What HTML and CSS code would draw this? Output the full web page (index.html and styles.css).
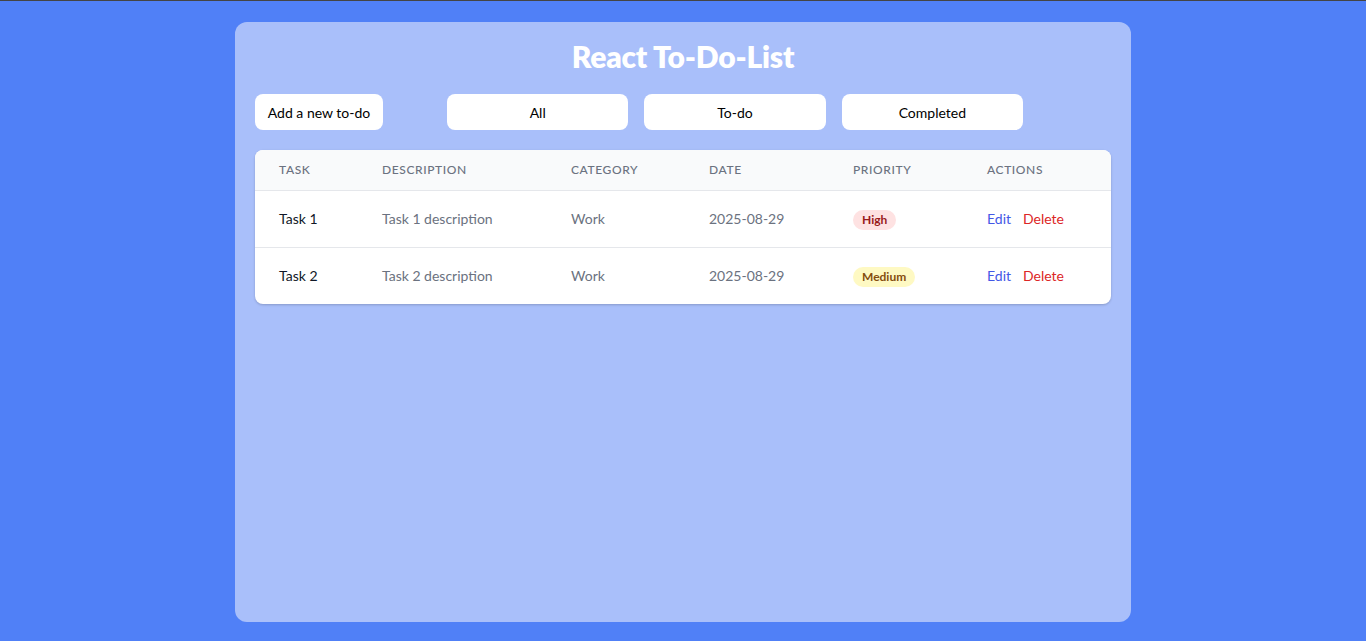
FILE: index.html
```html
<!DOCTYPE html>
<html lang="en">
<head>
<meta charset="utf-8">
<title>React To-Do-List</title>
<link rel="stylesheet" href="styles.css">
</head>
<body>
<div class="topline"></div>
<main class="page">
  <section class="panel">
    <h1 class="title">React To-Do-List</h1>
    <div class="toolbar">
      <button class="btn btn-add">Add a new to-do</button>
      <div class="filters">
        <button class="btn btn-filter">All</button>
        <button class="btn btn-filter">To-do</button>
        <button class="btn btn-filter">Completed</button>
      </div>
    </div>
    <div class="table-wrap">
      <table class="todo-table">
        <colgroup>
          <col class="c1"><col class="c2"><col class="c3"><col class="c4"><col class="c5"><col class="c6">
        </colgroup>
        <thead>
          <tr>
            <th>Task</th><th>Description</th><th>Category</th><th>Date</th><th>Priority</th><th>Actions</th>
          </tr>
        </thead>
        <tbody>
          <tr>
            <td class="task">Task 1</td>
            <td class="muted">Task 1 description</td>
            <td class="muted">Work</td>
            <td class="muted">2025-08-29</td>
            <td><span class="badge badge-high">High</span></td>
            <td class="actions"><a class="edit">Edit</a><a class="delete">Delete</a></td>
          </tr>
          <tr>
            <td class="task">Task 2</td>
            <td class="muted">Task 2 description</td>
            <td class="muted">Work</td>
            <td class="muted">2025-08-29</td>
            <td><span class="badge badge-medium">Medium</span></td>
            <td class="actions"><a class="edit">Edit</a><a class="delete">Delete</a></td>
          </tr>
        </tbody>
      </table>
    </div>
  </section>
</main>
</body>
</html>
```
FILE: styles.css
```css
* { box-sizing: border-box; }
html, body { height: 100%; }
body {
  margin: 0;
  background: #5080f7;
  font-family: Lato, "Noto Sans", sans-serif;
  color: #111827;
}
.topline { height: 1px; background: #444; }
.page {
  display: flex;
  justify-content: center;
  padding-top: 21px;
}
.panel {
  width: 896px;
  height: 600px;
  background: #a9bffa;
  border-radius: 12px;
  padding: 16px 20px 20px;
}
.title {
  margin: 0 0 20px;
  text-align: center;
  color: #fff;
  font-size: 30px;
  line-height: 36px;
  font-weight: 800;
  letter-spacing: -0.2px;
}
.toolbar {
  display: flex;
  align-items: center;
  margin-bottom: 20px;
}
.btn {
  height: 36px;
  border: none;
  background: #fff;
  border-radius: 8px;
  font-family: inherit;
  font-size: 14px;
  color: #000;
  padding: 0;
  cursor: pointer;
}
.btn-add { width: 128px; }
.filters {
  display: flex;
  gap: 16px;
  margin-left: 64px;
}
.btn-filter { width: 181.33px; }
.table-wrap {
  background: #fff;
  border-radius: 8px;
  overflow: hidden;
  box-shadow: 0 1px 3px rgba(0,0,0,0.12), 0 1px 2px rgba(0,0,0,0.08);
}
.todo-table {
  width: 100%;
  border-collapse: collapse;
  table-layout: fixed;
}
.c1 { width: 103px; }
.c2 { width: 189px; }
.c3 { width: 138px; }
.c4 { width: 144px; }
.c5 { width: 134px; }
.c6 { width: 148px; }
thead tr { background: #f9fafb; }
th {
  text-align: left;
  font-weight: 500;
  font-size: 12px;
  line-height: 16px;
  text-transform: uppercase;
  letter-spacing: 0.6px;
  color: #6b7280;
  padding: 12px 24px;
  border-bottom: 1px solid #e5e7eb;
}
td {
  padding: 16px 24px;
  font-size: 14px;
  line-height: 24px;
  white-space: nowrap;
}
tbody tr + tr td { border-top: 1px solid #e5e7eb; }
.task { color: #111827; }
.muted { color: #6b7280; }
.badge {
  display: inline-block;
  padding: 0 9px;
  border-radius: 9999px;
  font-size: 12px;
  line-height: 20px;
  font-weight: 700;
}
.badge-high { background: #fee2e2; color: #991b1b; }
.badge-medium { background: #fef9c3; color: #854d0e; }
.actions a { cursor: pointer; }
.edit { color: #4357e6; margin-right: 12px; }
.delete { color: #dc2626; }
```
